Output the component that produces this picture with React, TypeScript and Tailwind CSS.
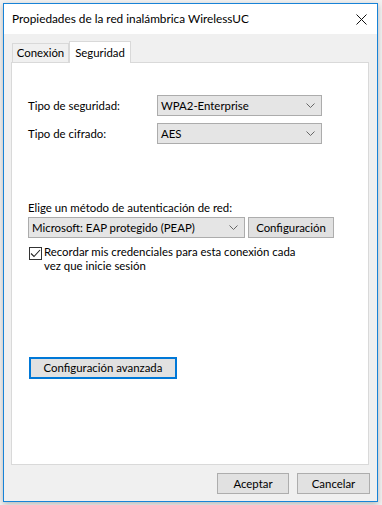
import React from "react";

const font = { fontFamily: "Lato, 'Liberation Sans', sans-serif" };

function Chevron() {
  return (
    <svg width="9" height="6" viewBox="0 0 9 6" className="shrink-0">
      <path d="M0.5 0.5 L4.5 4.5 L8.5 0.5" fill="none" stroke="#666" strokeWidth="1" />
    </svg>
  );
}

function Select({ value, width }: { value: string; width: string }) {
  return (
    <div
      className={`${width} h-[21px] flex items-center justify-between border border-[#acacac] bg-[#e5e5e5] pl-[3px] pr-[6px] text-[11.4px] text-black`}
    >
      <span>{value}</span>
      <Chevron />
    </div>
  );
}

function Button({ label, width }: { label: string; width: string }) {
  return (
    <div
      className={`${width} h-[21px] flex items-center justify-center border border-[#adadad] bg-[#e1e1e1] text-[11.4px] text-black`}
    >
      {label}
    </div>
  );
}

export default function App() {
  return (
    <div className="w-[382px] h-[505px] bg-[#f2f2f2] pl-[3px] pt-[3px] overflow-hidden" style={font}>
      <div className="w-[375px] h-[499px] border border-[#1883d7] flex flex-col bg-[#f0f0f0] shadow-[0_2px_6px_rgba(0,0,0,0.25)]">
        {/* Title bar */}
        <div className="h-[30px] bg-white flex items-center justify-between pl-[8px] pr-[10px]">
          <span className="text-[11.8px] text-black">Propiedades de la red inalámbrica WirelessUC</span>
          <svg width="11" height="11" viewBox="0 0 11 11">
            <path d="M0.5 0.5 L10.5 10.5 M10.5 0.5 L0.5 10.5" stroke="#111" strokeWidth="1" />
          </svg>
        </div>

        {/* Tabs */}
        <div className="pl-[7px] pt-[7px] flex items-end">
          <div className="ml-[1px] h-[19px] w-[57px] border border-b-0 border-[#d9d9d9] bg-[#f0f0f0] flex items-center justify-center text-[11.4px] text-black">
            Conexión
          </div>
          <div className="relative -mb-px z-10 h-[22px] w-[62px] border border-b-0 border-[#d9d9d9] bg-white flex items-center justify-center text-[11.4px] text-black">
            Seguridad
          </div>
        </div>

        {/* Panel */}
        <div className="ml-[7px] w-[358px] h-[403px] border border-[#d9d9d9] bg-white pl-[16px] pt-[32px] text-[11.4px] text-black">
          <div className="flex items-center h-[21px]">
            <span className="w-[129px]">Tipo de seguridad:</span>
            <Select value="WPA2-Enterprise" width="w-[165px]" />
          </div>
          <div className="flex items-center h-[21px] mt-[7px]">
            <span className="w-[129px]">Tipo de cifrado:</span>
            <Select value="AES" width="w-[165px]" />
          </div>

          <div className="mt-[56px] leading-[16px] h-[17px]">Elige un método de autenticación de red:</div>
          <div className="flex gap-[3px]">
            <Select value="Microsoft: EAP protegido (PEAP)" width="w-[217px]" />
            <Button label="Configuración" width="w-[86px]" />
          </div>

          <div className="flex mt-[7px] pl-[1px]">
            <div className="mt-[2px] w-[13px] h-[13px] border border-[#333] bg-white flex items-center justify-center shrink-0">
              <svg width="11" height="9" viewBox="0 0 11 9">
                <path d="M1 4.5 L4 7.5 L10 1" fill="none" stroke="#222" strokeWidth="1.1" />
              </svg>
            </div>
            <div className="ml-[2px] leading-[14px]">
              Recordar mis credenciales para esta conexión cada
              <br />
              vez que inicie sesión
            </div>
          </div>

          <div className="mt-[84px] ml-[1px] w-[148px] h-[22px] border-2 border-[#0078d7] bg-[#e1e1e1] flex items-center justify-center">
            Configuración avanzada
          </div>
        </div>

        {/* Footer */}
        <div className="flex justify-end gap-[8px] pr-[7px] mt-[8px]">
          <Button label="Aceptar" width="w-[72px]" />
          <Button label="Cancelar" width="w-[73px]" />
        </div>
      </div>
    </div>
  );
}
